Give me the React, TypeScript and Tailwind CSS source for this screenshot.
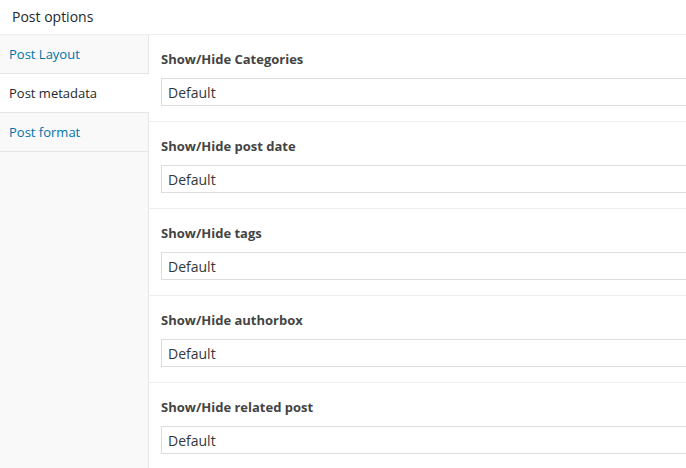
import { useState } from 'react';

const tabs = ['Post Layout', 'Post metadata', 'Post format'];

const fields = [
  'Show/Hide Categories',
  'Show/Hide post date',
  'Show/Hide tags',
  'Show/Hide authorbox',
  'Show/Hide related post',
];

export default function App() {
  const [active, setActive] = useState(1);

  return (
    <div className="w-[686px] h-[468px] overflow-hidden bg-white flex flex-col font-['Open_Sans',sans-serif] text-[#23282d]">
      {/* Header */}
      <div className="h-[35px] shrink-0 border-b border-[#eeeeee] flex items-center px-3">
        <span className="text-[14px] leading-none">Post options</span>
      </div>

      <div className="flex flex-1 min-h-0">
        {/* Sidebar tabs */}
        <div className="w-[149px] shrink-0 flex flex-col bg-[#f9f9f9]">
          {tabs.map((tab, i) => (
            <button
              key={tab}
              onClick={() => setActive(i)}
              className={`h-[39px] shrink-0 flex items-center pl-[9px] pt-[1px] text-left text-[13px] border-b border-[#e5e5e5] ${
                i === active ? 'bg-white text-[#23282d]' : 'border-r text-[#0073aa]'
              }`}
            >
              {tab}
            </button>
          ))}
          <div className="flex-1 border-r border-[#e5e5e5]" />
        </div>

        {/* Fields */}
        <div className="flex-1 min-w-0">
          {fields.map((label) => (
            <div key={label} className="pt-[14px] pb-[15px] pl-3 border-b border-[#eeeeee]">
              <div className="text-[13px] font-bold leading-[20px] text-[#444444]">{label}</div>
              <select
                defaultValue="default"
                className="mt-[9px] w-[580px] h-[28px] appearance-none border border-[#dddddd] bg-white pl-[6px] text-[14px] text-[#32373c] outline-none"
              >
                <option value="default">Default</option>
                <option value="show">Show</option>
                <option value="hide">Hide</option>
              </select>
            </div>
          ))}
        </div>
      </div>
    </div>
  );
}
